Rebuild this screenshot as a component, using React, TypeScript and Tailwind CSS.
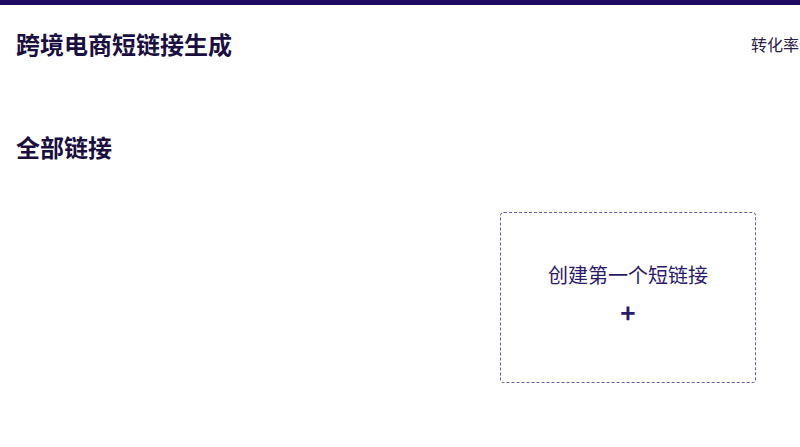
import React from 'react';

export default function App() {
  return (
    <div className="min-h-screen w-full overflow-hidden bg-white text-[#1b0f3f]" style={{ fontFamily: '"Noto Sans CJK SC", "Noto Sans", sans-serif' }}>
      <div className="h-[5px] bg-[#1c0b5e]" />
      <header className="flex items-center justify-between px-4 pt-[23px]">
        <h1 className="text-2xl font-bold leading-8 whitespace-nowrap">跨境电商短链接生成</h1>
        <nav className="flex shrink-0 translate-x-[47px] text-base whitespace-nowrap text-[#2a2142]">
          <span>转化率优化</span>
        </nav>
      </header>
      <main className="px-4 pt-[71px]">
        <h2 className="text-2xl font-bold leading-8">全部链接</h2>
        <div className="mt-[49px] flex justify-end pr-[28px]">
          <button className="flex h-[171px] w-[256px] flex-col items-center justify-center gap-[7px] rounded border border-dashed border-[#6a5e9e] pb-[6px] text-[#2b1a6b]">
            <span className="text-xl leading-7">创建第一个短链接</span>
            <span className="text-[26px] font-semibold leading-8">+</span>
          </button>
        </div>
      </main>
    </div>
  );
}
